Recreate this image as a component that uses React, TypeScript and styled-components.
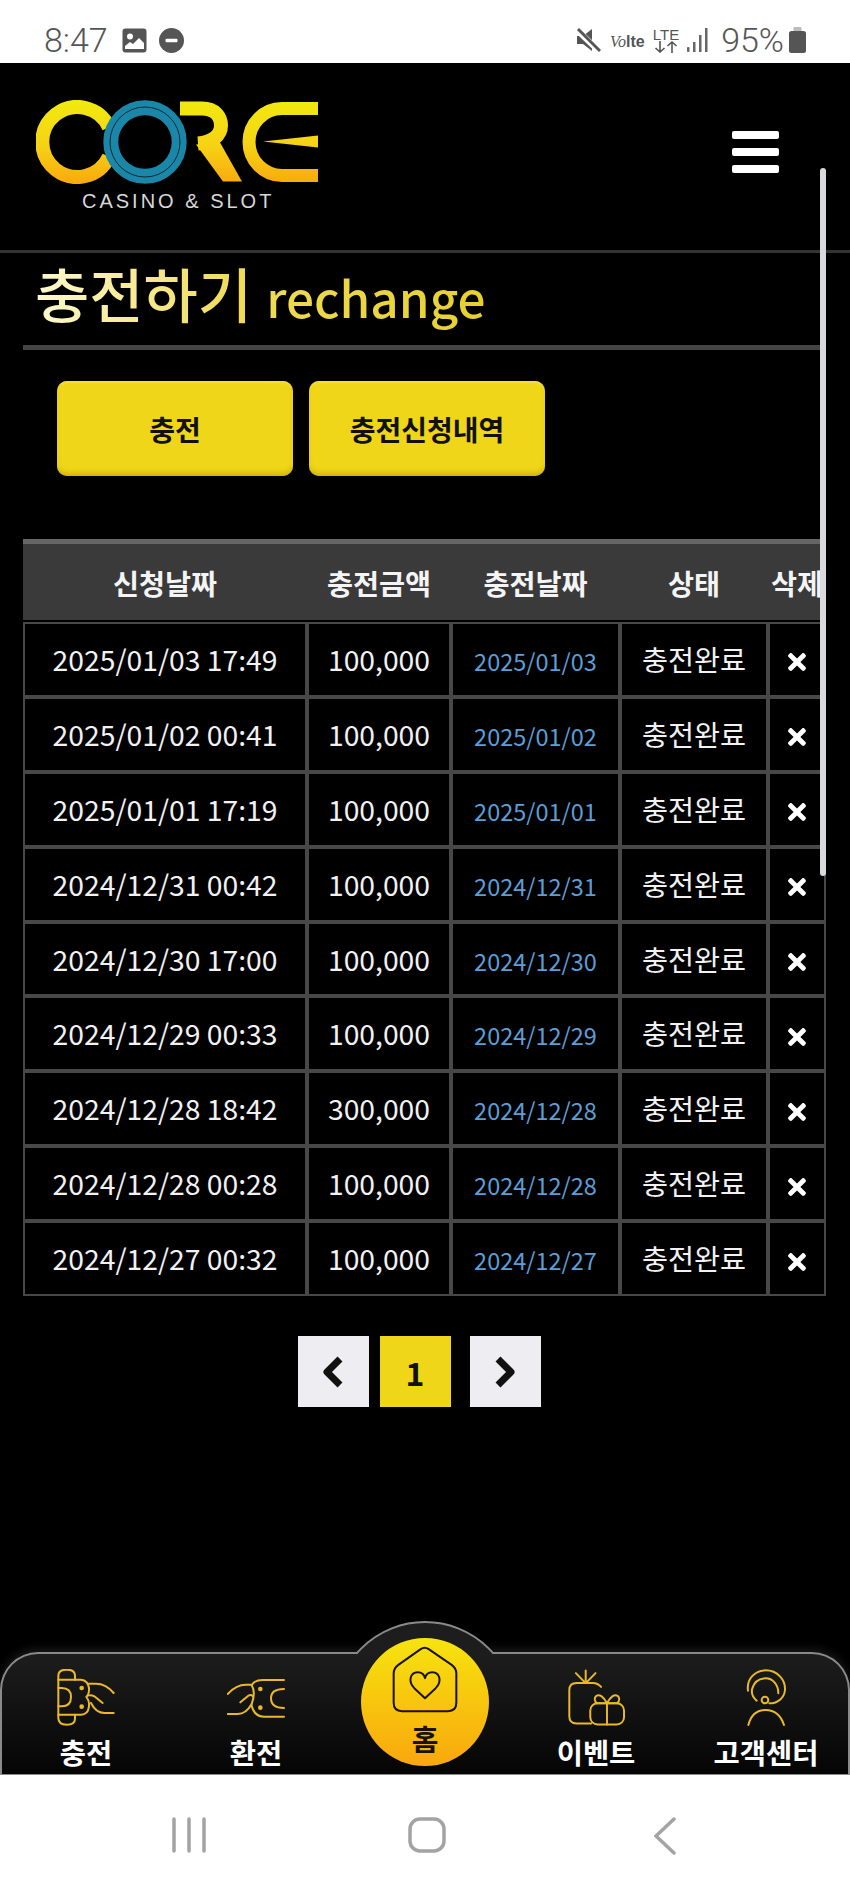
import React from 'react'
import styled, { createGlobalStyle } from 'styled-components'
import { FaTimes } from 'react-icons/fa'

const FONT = '"Noto Sans CJK KR", "Noto Sans", sans-serif'

const GlobalStyle = createGlobalStyle`
  html, body {
    margin: 0;
    padding: 0;
    background: #000;
    font-family: ${FONT};
  }
  * {
    box-sizing: border-box;
  }
`

const Screen = styled.div`
  display: flex;
  flex-direction: column;
  width: 850px;
  height: 1889px;
  overflow: hidden;
  background: #000;
`

const StatusBar = styled.div`
  display: flex;
  align-items: center;
  justify-content: space-between;
  height: 63px;
  padding: 17px 44px 0 44px;
  background: #fff;
  color: #555;
`

const StatusGroup = styled.div`
  display: flex;
  align-items: center;
`

const Clock = styled.span`
  font-family: Roboto, sans-serif;
  font-size: 34px;
  font-weight: 300;
  line-height: 36px;
  margin-right: 14px;
`

const Percent = styled.span`
  font-family: Roboto, sans-serif;
  font-size: 34px;
  font-weight: 300;
  line-height: 36px;
  margin: 0 5px 0 12px;
`

const VoLte = styled.span`
  font-family: "Liberation Sans", sans-serif;
  font-size: 16px;
  font-weight: 700;
  margin: 3px 8px 0 9px;
  white-space: nowrap;

  i {
    font-family: "Liberation Serif", serif;
    font-weight: 400;
  }
`

const LteStack = styled.div`
  display: flex;
  flex-direction: column;
  align-items: center;
  font-family: "Liberation Sans", sans-serif;
  font-size: 15px;
  line-height: 13px;
  margin-right: 8px;
`

const Page = styled.main`
  position: relative;
  flex: 1;
  background: #000;
`

const ScrollThumb = styled.div`
  position: absolute;
  top: 105px;
  left: 820px;
  width: 6px;
  height: 708px;
  border-radius: 3px;
  background: #d9d9de;
`

const Header = styled.header`
  display: flex;
  justify-content: space-between;
  height: 190px;
  padding: 37px 71px 0 36px;
  border-bottom: 3px solid #333;
`

const LogoBox = styled.div`
  display: flex;
  flex-direction: column;
  align-items: flex-start;
`

const LogoCaption = styled.span`
  margin: 5px 0 0 46px;
  font-family: "Liberation Sans", sans-serif;
  font-size: 20px;
  line-height: 24px;
  letter-spacing: 3px;
  color: #d8d8d8;
  white-space: nowrap;
`

const Burger = styled.div`
  display: flex;
  flex-direction: column;
  gap: 9px;
  width: 47px;
  margin-top: 31px;
`

const BurgerBar = styled.span`
  height: 8px;
  border-radius: 2px;
  background: #fff;
`

const TitleBlock = styled.div`
  width: 797px;
  height: 97px;
  margin-left: 23px;
  padding-left: 12px;
  border-bottom: 5px solid #444;
`

const Title = styled.h1`
  display: inline-block;
  margin: 0;
  font-size: 59px;
  font-weight: 500;
  line-height: 80px;
  white-space: nowrap;
  background: linear-gradient(90deg, #fff9cf 0%, #f0dc55 45%, #e6d02e 100%);
  -webkit-background-clip: text;
  background-clip: text;
  color: transparent;
`

const TitleSub = styled.span`
  font-size: 49.5px;
  margin-left: 3px;
`

const Tabs = styled.div`
  display: flex;
  gap: 16px;
  padding: 31px 0 0 57px;
`

const TabButton = styled.button`
  width: 236px;
  height: 95px;
  border: 0;
  border-radius: 10px;
  background: #efd618;
  box-shadow: inset 0 -5px 6px -3px #c2a812, inset 0 3px 3px -1px #f5e040;
  font-family: ${FONT};
  font-size: 28px;
  font-weight: 700;
  color: #111;
`

const Table = styled.table`
  width: 803px;
  margin: 63px 0 0 23px;
  table-layout: fixed;
  border-collapse: separate;
  border-spacing: 0;
`

const HeadCell = styled.th`
  height: 83px;
  padding: 0;
  border-top: 5px solid #666;
  border-bottom: 2px solid #000;
  background: #3a3a3a;
  font-size: 28.3px;
  font-weight: 700;
  color: #f4f4f4;
  white-space: nowrap;
  overflow: hidden;
`

const Cell = styled.td`
  height: 74.9px;
  padding: 0 0 2px;
  border: 2px solid #484848;
  background: #000;
  font-size: 28.3px;
  font-weight: 400;
  text-align: center;
  color: #f2f2f2;
  white-space: nowrap;
`

const DateLink = styled.span`
  display: block;
  padding-top: 5px;
  font-size: 23.5px;
  color: #5a9fd8;
`

const DeleteMark = styled.span`
  display: flex;
  justify-content: center;
  padding-top: 8px;
  font-size: 26px;
  color: #fff;
`

const Pager = styled.nav`
  display: flex;
  justify-content: center;
  gap: 11px;
  margin-top: 40px;
  padding-right: 12px;
`

const PageButton = styled.button<{ $active?: boolean; $pushed?: boolean }>`
  display: flex;
  align-items: center;
  justify-content: center;
  width: 71px;
  height: 71px;
  padding: 0;
  border: 0;
  margin-left: ${p => (p.$pushed ? '8px' : '0')};
  background: ${p => (p.$active ? '#efd618' : '#eeedf1')};
  font-family: ${FONT};
  font-size: 32px;
  font-weight: 700;
  color: #111;
`

const BottomNav = styled.nav`
  position: relative;
  display: grid;
  grid-template-columns: repeat(5, 170px);
  height: 123px;
  border: 2px solid #8a8a8a;
  border-bottom-width: 1px;
  border-radius: 38px 38px 0 0;
  background: linear-gradient(180deg, #1d1d1d 0%, #050505 100%);
  box-shadow: 0 -3px 10px rgba(255, 255, 255, 0.1);
`

const Hump = styled.div`
  position: absolute;
  top: -33px;
  left: 355px;
  width: 136px;
  height: 34px;
  overflow: hidden;
`

const HumpArc = styled.div`
  position: absolute;
  top: 0;
  left: -23px;
  width: 182px;
  height: 182px;
  border: 2px solid #8a8a8a;
  border-radius: 50%;
  background: #1d1d1d;
`

const NavItem = styled.a`
  display: flex;
  flex-direction: column;
  align-items: center;
  padding-top: 15px;
  font-size: 28.5px;
  font-weight: 700;
  line-height: 34px;
  color: #fff;
  margin-left: -2px;
`

const NavLabel = styled.span`
  margin-top: 9px;
  white-space: nowrap;
`

const HomeItem = styled.a`
  position: relative;
  display: flex;
  flex-direction: column;
  align-items: center;
  width: 128px;
  height: 128px;
  margin: -16px 0 0 19px;
  padding-top: 8px;
  border-radius: 50%;
  background: linear-gradient(180deg, #f6e40f 0%, #f9a70d 100%);
  font-size: 29px;
  font-weight: 700;
  line-height: 34px;
  color: #1a1200;
`

const HomeLabel = styled.span`
  margin-top: 8px;
`

const SoftKeys = styled.div`
  display: grid;
  grid-template-columns: repeat(3, 1fr);
  height: 114px;
  padding: 42px 0 0 0;
  background: #fff;
`

const SoftKey = styled.div<{ $shift: number }>`
  display: flex;
  justify-content: center;
  margin-left: ${p => p.$shift}px;
`

const GOLD = '#e9b92a'

const PictureIcon = () => (
  <svg width="25" height="25" viewBox="0 0 25 25">
    <rect x="0.5" y="0.5" width="24" height="24" rx="3" fill="#555" />
    <circle cx="8" cy="8.5" r="3" fill="#fff" />
    <path d="M3 21 V18 L8 14 L11 16 L17 10 L22 15 V21 Z" fill="#fff" />
  </svg>
)

const DndIcon = () => (
  <svg width="25" height="25" viewBox="0 0 25 25" style={{ marginLeft: 12 }}>
    <circle cx="12.5" cy="12.5" r="12.5" fill="#555" />
    <rect x="6.5" y="10.8" width="12" height="3.4" rx="1" fill="#fff" />
  </svg>
)

const MuteIcon = () => (
  <svg width="25" height="26" viewBox="0 0 25 26">
    <path d="M1 9 H7 L16 2 V24 L7 17 H1 Z" fill="#555" />
    <path d="M1 3 L24 25" stroke="#fff" strokeWidth="6" />
    <path d="M2 2 L24 24" stroke="#555" strokeWidth="3" />
  </svg>
)

const ArrowsIcon = () => (
  <svg width="24" height="12" viewBox="0 0 24 12" fill="none" stroke="#555" strokeWidth="1.6">
    <path d="M6 0 V11 M1.5 7 L6 11 L10.5 7" />
    <path d="M18 12 V1 M13.5 5 L18 1 L22.5 5" />
  </svg>
)

const SignalIcon = () => (
  <svg width="22" height="24" viewBox="0 0 22 24" fill="#666">
    <rect x="0" y="19" width="2.5" height="5" rx="1" />
    <rect x="6" y="14" width="2.5" height="10" />
    <rect x="12" y="7" width="2.5" height="17" />
    <rect x="18" y="0" width="2.5" height="24" />
  </svg>
)

const BatteryIcon = () => (
  <svg width="17" height="26" viewBox="0 0 17 26">
    <rect x="4.5" y="0" width="8" height="5" rx="1" fill="#bbb" />
    <rect x="0" y="4" width="17" height="22" rx="2.5" fill="#555" />
  </svg>
)

const CoreLogo = () => (
  <svg width="285" height="84" viewBox="16 15.5 285 84">
    <defs>
      <linearGradient id="logoGold" gradientUnits="userSpaceOnUse" x1="0" y1="16" x2="0" y2="99">
        <stop offset="0" stopColor="#f1ea10" />
        <stop offset="0.55" stopColor="#f6d215" />
        <stop offset="1" stopColor="#f9a90e" />
      </linearGradient>
    </defs>
    <g fill="none" stroke="url(#logoGold)" strokeWidth="14">
      <path d="M89 42.7 A35 35 0 1 0 89 72.3" />
      <path d="M160 24 H182 C195 24 201 32 201 41 C201 51 192 58 178 59" />
      <path d="M298 24 H262 A33 33.5 0 0 0 262 91 H298" strokeWidth="13" />
    </g>
    <path d="M176 60 L200 58 L222 97 L203 97 Z" fill="url(#logoGold)" />
    <path d="M243 57 L298 51 L298 63 Z" fill="url(#logoGold)" />
    <circle cx="125" cy="57.5" r="34.2" fill="none" stroke="#1a86a8" strokeWidth="15" />
    <circle cx="125" cy="57.5" r="35" fill="none" stroke="#0a2a38" strokeWidth="1" />
  </svg>
)

const ChevronIcon = ({ flip }: { flip?: boolean }) => (
  <svg width="22" height="32" viewBox="0 0 22 32" fill="none" stroke="#111" strokeWidth="7">
    <path d={flip ? 'M4 3 L17 16 L4 29' : 'M18 3 L5 16 L18 29'} strokeLinejoin="round" />
  </svg>
)

const navIconProps = {
  fill: 'none',
  stroke: GOLD,
  strokeWidth: 6,
  strokeLinecap: 'round' as const,
  strokeLinejoin: 'round' as const,
}

const ChargeIcon = () => (
  <svg width="58" height="57" viewBox="48 28 174 171" {...navIconProps}>
    <path d="M52 60 V48 Q52 30 77 30 Q102 30 102 48 V60" />
    <path d="M52 165 V175 Q52 195 77 195 Q102 195 102 177 V165" />
    <path d="M52 60 V165 M52 60 H120 Q141 62 144 85 Q146 100 136 112 Q146 125 144 140 Q141 165 120 165 H52" />
    <path d="M52 85 H62 Q90 85 90 112 Q90 140 62 140 H52" />
    <path d="M140 72 H165 Q195 72 218 100" />
    <path d="M140 108 Q150 105 160 110 L185 130" />
    <path d="M150 130 Q165 160 190 160 H218" />
    <circle cx="122" cy="85" r="4" fill={GOLD} />
    <circle cx="122" cy="141" r="4" fill={GOLD} />
  </svg>
)

const ExchangeIcon = () => (
  <svg width="58" height="41" viewBox="558 52 174 123" {...navIconProps} style={{ margin: '9px 0 7px' }}>
    <path d="M560 100 Q585 72 615 72 H632" />
    <path d="M632 74 Q640 58 665 58 H729" />
    <path d="M560 160 H590 Q615 160 632 130" />
    <path d="M632 135 Q640 168 670 168 H729" />
    <path d="M598 125 L622 105 Q632 100 636 108" />
    <path d="M632 74 Q645 95 632 130" />
    <path d="M729 85 Q690 85 690 113 Q690 142 729 142" />
    <circle cx="658" cy="85" r="4" fill={GOLD} />
    <circle cx="658" cy="141" r="4" fill={GOLD} />
  </svg>
)

const GiftIcon = () => (
  <svg width="57" height="57" viewBox="34 27 174 171" {...navIconProps}>
    <path d="M135 80 Q125 68 110 68 H60 Q38 68 38 90 V170 Q38 192 60 192 H105" />
    <path d="M88 30 V65 M58 38 L84 65 M118 38 L92 65" />
    <rect x="102" y="130" width="103" height="65" rx="22" />
    <path d="M153 130 V195" />
    <path d="M153 130 L122 130 Q110 118 120 108 Q135 98 153 130 Q171 98 186 108 Q196 118 184 130 L153 130" />
  </svg>
)

const SupportIcon = () => (
  <svg width="46" height="57" viewBox="568 27 126 171" {...navIconProps}>
    <path d="M577 92 C572 55 600 31 630 31 C665 31 690 60 688 90 C686 112 668 130 641 130" />
    <path d="M603 122 C590 110 586 98 590 85 C596 65 612 55 630 55 C650 55 668 72 668 100" />
    <circle cx="628" cy="120" r="10" />
    <path d="M578 195 Q590 150 630 150 Q670 150 685 195" />
  </svg>
)

const HomeIcon = () => (
  <svg width="66" height="67" viewBox="0 0 198 200" fill="none" stroke="#1a1200" strokeWidth="6" strokeLinejoin="round">
    <path d="M86 9 Q98 0 110 9 L179 56 Q193 66 193 82 V170 Q193 195 168 195 H30 Q5 195 5 170 V82 Q5 66 19 56 Z" />
    <path d="M99 156 L67 126 C46 105 56 78 77 78 C89 78 97 86 99 96 C101 86 109 78 121 78 C142 78 152 105 131 126 Z" />
  </svg>
)

const RecentsKey = () => (
  <svg width="36" height="36" viewBox="0 0 36 36" stroke="#a3a3a3" strokeWidth="3.5" strokeLinecap="round">
    <path d="M3 2 V34 M18 2 V34 M33 2 V34" />
  </svg>
)

const HomeKey = () => (
  <svg width="38" height="36" viewBox="0 0 38 36" fill="none" stroke="#a3a3a3" strokeWidth="3.5">
    <rect x="2" y="2" width="34" height="32" rx="10" />
  </svg>
)

const BackKey = () => (
  <svg width="22" height="38" viewBox="0 0 22 38" fill="none" stroke="#a3a3a3" strokeWidth="3.5" strokeLinecap="round">
    <path d="M20 2 L2 19 L20 36" />
  </svg>
)

const columns = [284, 144, 169, 148, 58]
const headings = ['신청날짜', '충전금액', '충전날짜', '상태', '삭제']

const rows = [
  ['2025/01/03 17:49', '100,000', '2025/01/03'],
  ['2025/01/02 00:41', '100,000', '2025/01/02'],
  ['2025/01/01 17:19', '100,000', '2025/01/01'],
  ['2024/12/31 00:42', '100,000', '2024/12/31'],
  ['2024/12/30 17:00', '100,000', '2024/12/30'],
  ['2024/12/29 00:33', '100,000', '2024/12/29'],
  ['2024/12/28 18:42', '300,000', '2024/12/28'],
  ['2024/12/28 00:28', '100,000', '2024/12/28'],
  ['2024/12/27 00:32', '100,000', '2024/12/27'],
]

const App = () => (
  <Screen>
    <GlobalStyle />
    <StatusBar>
      <StatusGroup>
        <Clock>8:47</Clock>
        <PictureIcon />
        <DndIcon />
      </StatusGroup>
      <StatusGroup>
        <MuteIcon />
        <VoLte><i>Vo</i>lte</VoLte>
        <LteStack>
          LTE
          <ArrowsIcon />
        </LteStack>
        <SignalIcon />
        <Percent>95%</Percent>
        <BatteryIcon />
      </StatusGroup>
    </StatusBar>

    <Page>
      <Header>
        <LogoBox>
          <CoreLogo />
          <LogoCaption>CASINO &amp; SLOT</LogoCaption>
        </LogoBox>
        <Burger>
          <BurgerBar />
          <BurgerBar />
          <BurgerBar />
        </Burger>
      </Header>

      <TitleBlock>
        <Title>
          충전하기<TitleSub> rechange</TitleSub>
        </Title>
      </TitleBlock>

      <Tabs>
        <TabButton>충전</TabButton>
        <TabButton>충전신청내역</TabButton>
      </Tabs>

      <Table>
        <colgroup>
          {columns.map((w, i) => (
            <col key={i} width={w} />
          ))}
        </colgroup>
        <thead>
          <tr>
            {headings.map(h => (
              <HeadCell key={h}>{h}</HeadCell>
            ))}
          </tr>
        </thead>
        <tbody>
          {rows.map(r => (
            <tr key={r[0]}>
              <Cell>{r[0]}</Cell>
              <Cell>{r[1]}</Cell>
              <Cell>
                <DateLink>{r[2]}</DateLink>
              </Cell>
              <Cell>충전완료</Cell>
              <Cell>
                <DeleteMark>
                  <FaTimes />
                </DeleteMark>
              </Cell>
            </tr>
          ))}
        </tbody>
      </Table>

      <Pager>
        <PageButton>
          <ChevronIcon />
        </PageButton>
        <PageButton $active>1</PageButton>
        <PageButton $pushed>
          <ChevronIcon flip />
        </PageButton>
      </Pager>

      <ScrollThumb />
    </Page>

    <BottomNav>
      <Hump>
        <HumpArc />
      </Hump>
      <NavItem>
        <ChargeIcon />
        <NavLabel>충전</NavLabel>
      </NavItem>
      <NavItem>
        <ExchangeIcon />
        <NavLabel>환전</NavLabel>
      </NavItem>
      <HomeItem>
        <HomeIcon />
        <HomeLabel>홈</HomeLabel>
      </HomeItem>
      <NavItem>
        <GiftIcon />
        <NavLabel>이벤트</NavLabel>
      </NavItem>
      <NavItem>
        <SupportIcon />
        <NavLabel>고객센터</NavLabel>
      </NavItem>
    </BottomNav>

    <SoftKeys>
      <SoftKey $shift={95}>
        <RecentsKey />
      </SoftKey>
      <SoftKey $shift={5}>
        <HomeKey />
      </SoftKey>
      <SoftKey $shift={-87}>
        <BackKey />
      </SoftKey>
    </SoftKeys>
  </Screen>
)

export default App
